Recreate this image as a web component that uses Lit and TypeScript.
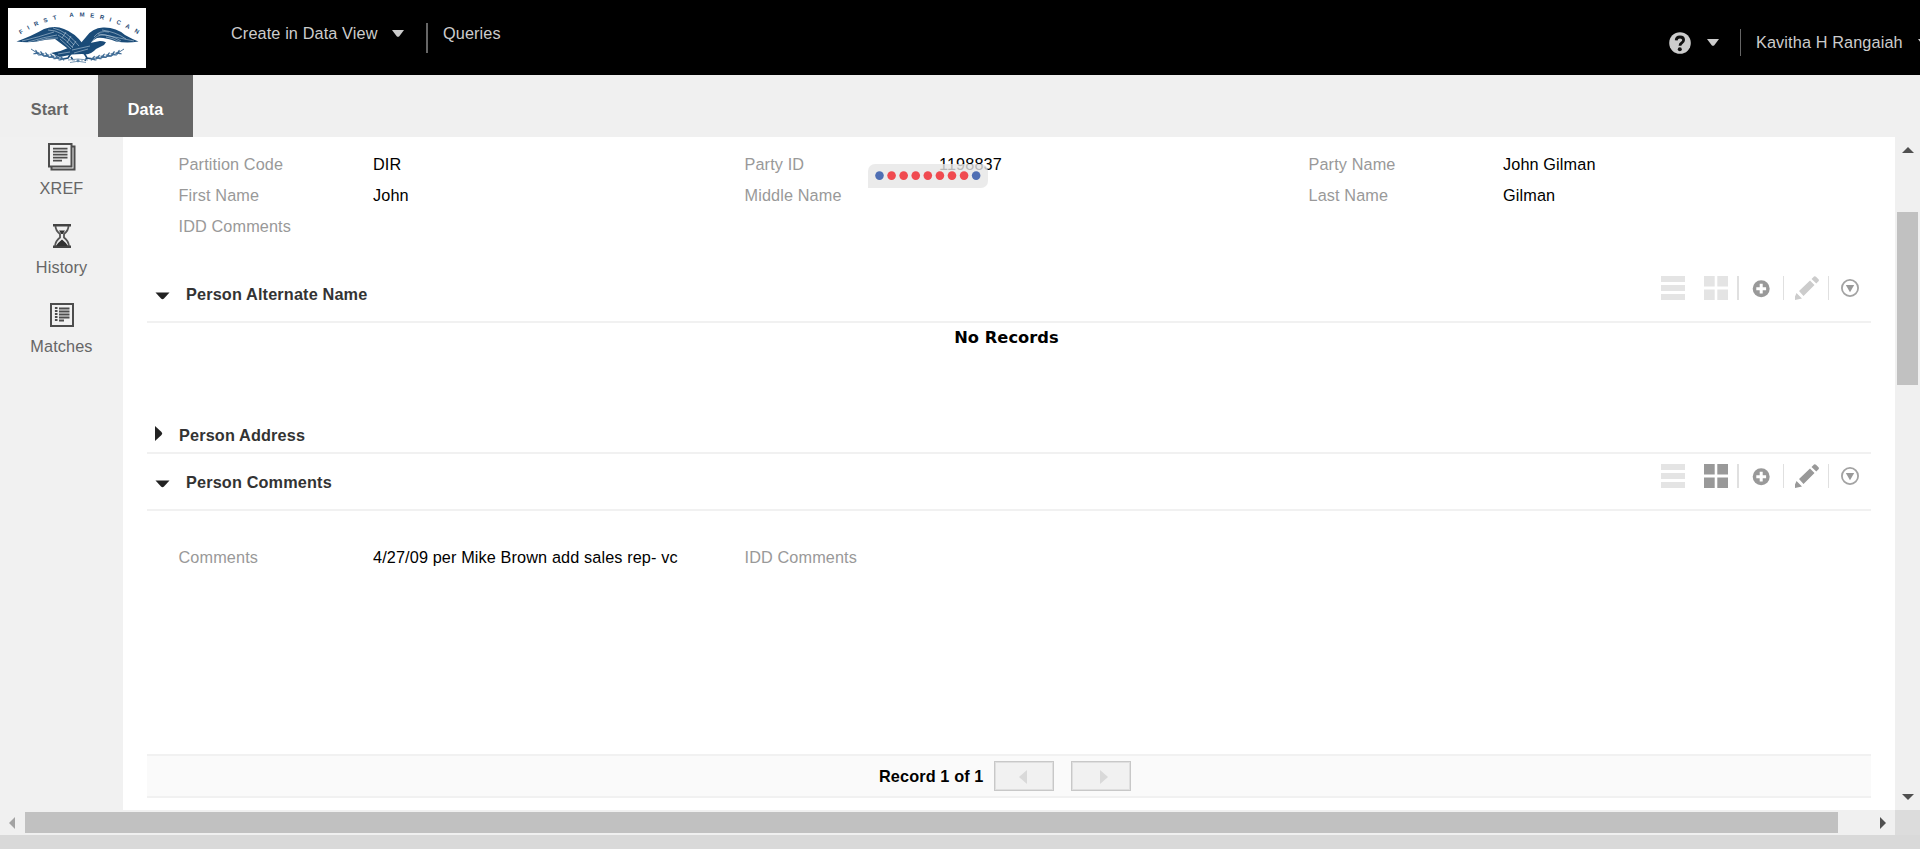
import { LitElement, html, css, svg } from "lit";
import { customElement, property } from "lit/decorators.js";

const caret = html`<svg class="caret" width="12" height="7" viewBox="0 0 12 7"><path d="M0 0H12L7.3 6.2Q6 7.4 4.7 6.2Z" fill="#ccc"/></svg>`;

const laurelLeaves = [0, 1, 2, 3, 4, 5];

@customElement("brand-logo")
class BrandLogo extends LitElement {
  static styles = css`
    :host { display: block; width: 138px; height: 60px; background: #fff; }
    svg { display: block; }
    .name { font: 700 6px "Liberation Sans", Arial, sans-serif; fill: #1f4a75; letter-spacing: 0; }
  `;
  branch() {
    return svg`
      <path d="M23 41Q34 50 55 50.5" fill="none" stroke="#1f5280" stroke-width=".8"/>
      ${laurelLeaves.map((i) => svg`
        <g transform="translate(${26 + i * 5} ${43.5 + i * 1.25}) rotate(${20 - i * 2})">
          <ellipse cx="2.5" cy="-2" rx="3.1" ry=".8" transform="rotate(38)" fill="#3f6c96"/>
          <ellipse cx="2" cy="2.2" rx="3.4" ry=".8" transform="rotate(-30)" fill="#3f6c96"/>
        </g>`)}`;
  }
  render() {
    return html`<svg width="138" height="60" viewBox="0 0 138 60">
      <defs><path id="arc" d="M12.5 26.5Q69 -8.500 128 25"/></defs>
      <text class="name"><textPath href="#arc" textLength="124">FIRST AMERICAN</textPath></text>
      <path d="M8.500 33.400Q24 28 36 21Q47 17 56 21Q67 25 75 36L77 46L63 43Q55 37 47 31Q38 31 29 33.500Q18 35 8.500 33.400Z" fill="#1a4b78"/>
      <path d="M72 36L78 29Q84 20 95 19.500Q108 19 117 27Q124 31 130.500 33.600Q119 35.500 108 33.500Q96 29 89 30Q83 33 81 38Z" fill="#1a4b78"/>
      <path d="M60 40Q70 35 82 35L92 33Q95 33 98 34.300L96 37L88 41Q82 48 74 46L64 46.500L52 49L43 45Q52 44 60 40Z" fill="#1a4b78"/>
      <path d="M64 44L60 50L55 51M63 49L65 52M76 45L79 50L85 51M79 49L77 53" fill="none" stroke="#1a4b78" stroke-width="1.600"/>
      <g fill="none" stroke="#c7d6e4" stroke-width=".55">
        <path d="M14 33Q31 29 46 24M20 34Q36 29 49 27M29 33Q40 29 50 30M40 22Q54 22 66 37M45 20Q59 23 71 38M50 27Q58 31 65 40M52 31L63 41M58 24L54 30M63 28L59 35M68 33L64 39"/>
        <path d="M86 29Q91 22 101 24M84 34Q88 26 97 27L126 33M94 22Q108 24 118 31M90 26Q104 27 113 33M98 29Q105 30 112 34M64 42L82 38M66 45L80 41M50 46L62 44"/>
      </g>
      ${this.branch()}
      <g transform="translate(139 0) scale(-1 1)">${this.branch()}</g>
      <path d="M60 52Q70 50 80 52M62 54.500Q70 52 78 54.500M66 51.500V53.500M74 51.500V53.500" fill="none" stroke="#6d8fae" stroke-width=".9"/>
      <circle cx="70" cy="52.700" r="1.500" fill="#5b82a5"/>
    </svg>`;
  }
}

@customElement("section-tools")
class SectionTools extends LitElement {
  @property({ type: Boolean }) active = false;
  static styles = css`
    :host { display: flex; height: 24px; align-items: center; }
    svg { display: block; flex: none; }
    .list { margin-right: 19px; }
    .sep { width: 1px; height: 24px; background: #e0e0e0; }
    .thick { width: 2px; margin-left: 9px; }
    .add { margin: 1px 13px 0 13px; }
    .pencil { margin: 0 9px 0 11px; }
    .menu { margin-left: 12px; }
  `;
  render() {
    const c = this.active ? "#999" : "#e4e4e4";
    const p = this.active ? "#999" : "#ccc";
    return html`
      <svg class="list" width="24" height="24"><path d="M0 0H24V6H0ZM0 9H24V15H0ZM0 18H24V24H0Z" fill="#e4e4e4"/></svg>
      <svg width="24" height="24"><path d="M0 0H10.700V10.500H0ZM13.300 0H24V10.500H13.300ZM0 13.500H10.700V24H0ZM13.300 13.500H24V24H13.300Z" fill=${c}/></svg>
      <span class="sep thick"></span>
      <svg class="add" width="18" height="18"><circle cx="9.200" cy="8.700" r="8.500" fill="#999"/><path d="M9.200 3.800V13.600M4.300 8.700H14.100" stroke="#fff" stroke-width="3"/></svg>
      <span class="sep"></span>
      <svg class="pencil" width="24" height="24"><path d="M1.500 17L7 22.500L0 24V20.500ZM4 15L15 4.500L19.500 9L8.500 20ZM16.500 3L19 0.500Q20 -.3 21 .7L23.500 3.200Q24.400 4.200 23.500 5.200L21.300 7.500Z" fill=${p}/></svg>
      <span class="sep"></span>
      <svg class="menu" width="18" height="18"><circle cx="9" cy="9" r="8.100" fill="none" stroke="#a3a3a3" stroke-width="1.800"/><path d="M4.800 6H13.200L9 13.300Z" fill="#999"/></svg>`;
  }
}

@customElement("app-root")
class AppRoot extends LitElement {
  static styles = css`
    :host { display: flex; flex-direction: column; width: 1920px; height: 849px; overflow: hidden;
      background: #d9d9d9; font: 16.25px/20px "Liberation Sans", Arial, sans-serif; letter-spacing: .12px; color: #000; white-space: nowrap; }
    * { box-sizing: border-box; }
    svg { display: block; flex: none; }
    .header { display: flex; align-items: flex-start; height: 75px; flex: none; background: #000; color: #ccc; padding-left: 8px; overflow: hidden; }
    .header > *, .right > * { flex: none; }
    .logo { margin: 8px 85px 0 0; }
    .create { width: 161px; padding-top: 23px; }
    .caret { margin-top: 30px; }
    .divider { width: 2px; height: 30px; background: #666; margin: 23px 15px 0 22px; }
    .queries { padding-top: 23px; }
    .right { display: flex; align-items: flex-start; margin-left: auto; width: 251px; }
    .help { margin-top: 32px; }
    .right .caret { margin: 39px 0 0 16px; }
    .right .user + .caret { margin-left: 0; }
    .thin { width: 1px; height: 27px; background: #666; margin: 29px 15px 0 21px; }
    .user { width: 162px; padding-top: 32px; }
    .tabs { display: flex; height: 62px; flex: none; background: #f0f0f0; font-weight: 700; color: #666; }
    .tab { height: 62px; padding-top: 24px; text-align: center; }
    .start { width: 98px; padding-left: 1px; }
    .data { width: 95px; background: #666; color: #fff; }
    .body { display: flex; height: 673px; flex: none; }
    .side { width: 123px; background: #f1f1f1; display: flex; flex-direction: column; align-items: center; color: #666; padding-top: 6px; }
    .nav { display: flex; flex-direction: column; align-items: center; height: 79px; }
    .ic { height: 35px; display: flex; align-items: flex-start; padding-left: 1px; }
    .nav .low { padding-top: 2px; }
    .main { flex: 1; background: #fff; padding: 12px 24px 0; display: flex; flex-direction: column; position: relative; }
    .fields { display: grid; grid-template-columns: 194.5px 371.5px 194.500px 369.500px 194.500px 1fr; grid-auto-rows: 31px; line-height: 30px; padding-left: 31.500px; }
    .fields .l { color: #999; }
    .party { height: 93px; margin-bottom: 24px; }
    .section { display: flex; justify-content: space-between; height: 57px; flex: none; border-bottom: 2px solid #f1f1f1; padding: 10px 12px 0 8px; font-weight: 700; color: #333; letter-spacing: .15px; }
    .title { display: flex; padding-top: 8px; }
    .down { margin: 8px 16px 0 0; }
    .norec { font: 700 16.25px/20px "DejaVu Sans", Verdana, sans-serif; letter-spacing: .05px; height: 99px; padding-top: 5px; text-align: center; padding-right: 5px; }
    .address { height: 32px; flex: none; border-bottom: 2px solid #f1f1f1; display: flex; padding: 3px 0 0 8px; font-weight: 700; color: #333; letter-spacing: .15px; }
    .address svg { margin: 1px 16px 0 0; }
    .comments { padding-top: 31px; height: 243px; align-content: start; }
    .pager { height: 44px; flex: none; background: #fafafa; border: solid #f1f1f1; border-width: 2px 0; display: flex; align-items: center; padding-left: 732px; font-weight: 700; }
    .count { width: 115px; }
    .btn { width: 60px; height: 30px; background: #f1f1f1; border: 1px solid #c8c8c8; box-shadow: inset 0 0 0 1px #dfdfdf; display: flex; align-items: center; justify-content: center; margin-right: 17px; padding: 2px 2px 0 0; }
    .next { padding: 2px 0 0 5px; }
    .loader { position: absolute; left: 745px; top: 27px; width: 120px; height: 24px; border-radius: 7px 7px 7px 0; background: rgba(230,230,230,.8); }
    .vbar { width: 25px; background: #f0f0f0; display: flex; flex-direction: column; align-items: center; padding: 10px 0; }
    .vthumb { width: 21px; height: 173px; background: #c1c1c1; margin: 59px 0 auto; }
    .hrow { display: flex; height: 25px; flex: none; background: #f0f0f0; align-items: center; padding-left: 9px; }
    .hthumb { width: 1813px; height: 21px; background: #c1c1c1; margin: 0 42px 0 10px; }
    .corner { width: 25px; height: 25px; background: #dcdcdc; margin-left: auto; }
  `;

  section(title: string, active: boolean) {
    return html`<div class="section">
      <div class="title"><svg class="down" width="15" height="8"><path d="M.5 .5H14.500L9 6.500Q7.500 8 6 6.500Z" fill="#222"/></svg><span>${title}</span></div>
      <section-tools ?active=${active}></section-tools>
    </div>`;
  }

  cells(items: string[]) {
    return items.map((t, i) => html`<span class=${i % 2 ? "v" : "l"}>${t}</span>`);
  }

  render() {
    return html`
      <div class="header">
        <brand-logo class="logo"></brand-logo>
        <span class="create">Create in Data View</span>${caret}
        <span class="divider"></span>
        <span class="queries">Queries</span>
        <div class="right">
          <svg class="help" width="22" height="22"><circle cx="11" cy="11" r="10.800" fill="#ccc"/><path d="M7.200 8.400Q7.300 5 11 5Q14.600 5 14.600 8Q14.600 9.800 12.600 11Q11 12 11 13.800" fill="none" stroke="#111" stroke-width="2.800"/><circle cx="10.800" cy="17.300" r="2" fill="#111"/></svg>
          ${caret}<span class="thin"></span><span class="user">Kavitha H Rangaiah</span>${caret}
        </div>
      </div>
      <div class="tabs"><div class="tab start">Start</div><div class="tab data">Data</div></div>
      <div class="body">
        <div class="side">
          <div class="nav"><div class="ic"><svg width="28" height="28" fill="none" stroke="#4d4d4d"><path d="M24 3.500H26.500V26.500H3.500V24" stroke-width="2"/><rect x="1" y="1" width="22.500" height="22.500" stroke-width="2"/><path d="M5 5.700H19.500M5 8.700H19.500M5 11.700H19.500M5 14.700H19.500M5 17.700H14" stroke-width="1.800"/></svg></div>XREF</div>
          <div class="nav"><div class="ic low"><svg width="18" height="24"><path d="M0 1.200H18M0 22.800H18" stroke="#444" stroke-width="2.400"/><path d="M2.500 2Q2.500 6.500 7 10V13.500Q2.500 17 2 22M15.500 2Q15.500 6.500 11 10V13.500Q15.500 17 16 22" fill="none" stroke="#555" stroke-width="1.800"/><path d="M3 22Q4.500 19 9 15.500Q13.500 19 15 22ZM6 6.500H12L9.700 10H8.300Z" fill="#333"/></svg></div>History</div>
          <div class="nav"><div class="ic low"><svg width="24" height="24" fill="none" stroke="#4d4d4d"><rect x="1" y="1" width="22" height="22" stroke-width="2"/><path d="M9 5.500H19.500M9 8.500H19.500M9 11.500H19.500M9 14.500H19.500M9 17.500H14" stroke-width="1.800"/><path d="M6.200 4V18.500" stroke-width="2.600" stroke-dasharray="2 1"/></svg></div>Matches</div>
        </div>
        <div class="main">
          <div class="fields party">${this.cells(["Partition Code", "DIR", "Party ID", "1198837", "Party Name", "John Gilman", "First Name", "John", "Middle Name", "", "Last Name", "Gilman", "IDD Comments", ""])}</div>
          <svg class="loader" width="120" height="24">${Array.from({ length: 9 }, (_, i) => svg`<circle cx=${11.5 + i * 12.08} cy="11.600" r="4.300" fill=${i % 8 ? "#f04a50" : "#4f6fb4"}/>`)}</svg>
          ${this.section("Person Alternate Name", false)}
          <div class="norec">No Records</div>
          <div class="address"><svg width="8" height="15"><path d="M0 0L6.500 6Q8 7.500 6.500 9L0 15Z" fill="#222"/></svg><span>Person Address</span></div>
          ${this.section("Person Comments", true)}
          <div class="fields comments">${this.cells(["Comments", "4/27/09 per Mike Brown add sales rep- vc", "IDD Comments", ""])}</div>
          <div class="pager"><span class="count">Record 1 of 1</span>
            <span class="btn"><svg width="8" height="14"><path d="M8 0V14L0 7Z" fill="#d9d9d9"/></svg></span>
            <span class="btn next"><svg width="8" height="14"><path d="M0 0V14L8 7Z" fill="#d9d9d9"/></svg></span>
          </div>
        </div>
        <div class="vbar">
          <svg width="12" height="6"><path d="M0 6H12L6 0Z" fill="#505050"/></svg>
          <div class="vthumb"></div>
          <svg width="12" height="6"><path d="M0 0H12L6 6Z" fill="#505050"/></svg>
        </div>
      </div>
      <div class="hrow">
        <svg width="6" height="12"><path d="M6 0V12L0 6Z" fill="#a3a3a3"/></svg>
        <div class="hthumb"></div>
        <svg width="6" height="12"><path d="M0 0V12L6 6Z" fill="#505050"/></svg>
        <div class="corner"></div>
      </div>`;
  }
}
